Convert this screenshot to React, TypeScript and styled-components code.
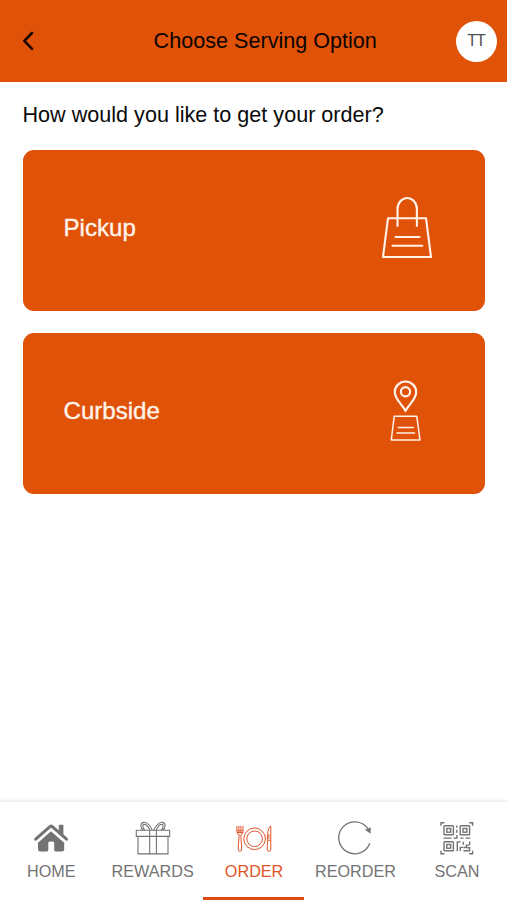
import React from 'react';
import styled, { createGlobalStyle } from 'styled-components';

const ORANGE = '#df5207';

const GlobalStyle = createGlobalStyle`
  * { box-sizing: border-box; }
  body { margin: 0; background: #fff; font-family: "Liberation Sans", Arial, sans-serif; }
  button { font: inherit; border: 0; padding: 0; background: none; cursor: pointer; }
  svg { display: block; }
`;

const Screen = styled.div`
  width: 100%;
  height: 100vh;
  display: flex;
  flex-direction: column;
  overflow: hidden;
`;

const Header = styled.header`
  height: 81.5px;
  flex: none;
  display: grid;
  grid-template-columns: 60px 1fr 60px;
  align-items: center;
  padding: 1px 10.5px 0 22px;
  background: ${ORANGE};
`;

const BackButton = styled.button`
  justify-self: start;
`;

const Title = styled.h1`
  margin: 0 0 0 12px;
  text-align: center;
  font-size: 21.6px;
  line-height: 26px;
  font-weight: 400;
  color: #0c0400;
  white-space: nowrap;
`;

const Avatar = styled.div`
  justify-self: end;
  width: 41px;
  height: 41px;
  display: flex;
  align-items: center;
  justify-content: center;
  border-radius: 50%;
  background: #fff;
  color: #4c5052;
  font-size: 16px;
  letter-spacing: -0.9px;
`;

const Content = styled.main`
  flex: 1;
  padding: 20px 22px 0 22.5px;
`;

const Question = styled.p`
  margin: 0 0 22px;
  font-size: 21.6px;
  line-height: 26px;
  color: #0b0b0b;
  white-space: nowrap;
`;

const Options = styled.div`
  display: grid;
  gap: 22px;
`;

const OptionCard = styled.button`
  height: 161.3px;
  display: flex;
  align-items: center;
  justify-content: space-between;
  padding: 0 52px 4px 41px;
  border-radius: 11px;
  background: ${ORANGE};
  color: #fff4ed;
`;

const OptionLabel = styled.span`
  font-size: 24.1px;
  -webkit-text-stroke: 0.35px currentColor;
`;

const TabBar = styled.nav`
  flex: none;
  height: 98px;
  display: grid;
  grid-template-columns: repeat(5, 1fr);
  background: #fff;
  box-shadow: 0 -1px 4px rgba(0, 0, 0, 0.12);
`;

const Tab = styled.button<{ $active?: boolean }>`
  display: flex;
  flex-direction: column;
  align-items: center;
  padding: 18.6px 0 0 1.2px;
  color: ${(p) => (p.$active ? '#e1542a' : '#737373')};
  border-bottom: 3px solid ${(p) => (p.$active ? '#dd4a17' : 'transparent')};
`;

const TabLabel = styled.span`
  margin-top: 5.4px;
  font-size: 16.2px;
  line-height: 18px;
`;

const BackIcon = () => (
  <svg width="13" height="20" viewBox="0 0 13 20" fill="none" stroke="#180700" strokeWidth="2.6" strokeLinecap="round" strokeLinejoin="round">
    <path d="M10 2 2.3 9.9 10 17.9" />
  </svg>
);

const BagIcon = () => (
  <svg width="52" height="64" viewBox="0 0 52 64" fill="none" stroke="#fff2e9" strokeWidth="2.1" strokeLinecap="round" strokeLinejoin="round">
    <path d="M7 22.2H45L50 61H2Z" />
    <path d="M16.5 30V13a9.7 11 0 0 1 19.4 0v17" />
    <path d="M14.5 41H38.5M11.5 49.7H41.3" />
  </svg>
);

const CurbsideIcon = () => (
  <svg width="54" height="64" viewBox="0 0 54 64" fill="none" stroke="#fff2e9" strokeLinecap="round" strokeLinejoin="round">
    <path strokeWidth="2.2" d="M26.5 32C23.6 26 15.8 20.2 15.8 13.2a10.7 10.7 0 0 1 21.4 0C37.2 20.2 29.4 26 26.5 32Z" />
    <circle strokeWidth="2.2" cx="26.5" cy="12.7" r="4.6" />
    <path strokeWidth="1.5" d="M15.2 37.3H37.8L41 61H12.3Z" />
    <path strokeWidth="1.5" d="M19.3 48.5H34.3M18 54H35.5" />
  </svg>
);

const HomeIcon = () => (
  <svg width="36" height="36" viewBox="0 0 36 36" fill="currentColor">
    <path d="M25.8 4.8q0-1 1-1h2.6q1 0 1 1v10l-4.6-4Z" />
    <path d="M2.7 18.2 17.2 5.4q.9-.7 1.8 0l14.5 12.8" fill="none" stroke="currentColor" strokeWidth="3.1" strokeLinecap="round" />
    <path d="M18 10.3 31.2 21.7V28q0 2.5-2.5 2.5H23q-1.8 0-1.8-1.5v-7q0-1.5-1.5-1.5h-2.9q-1.5 0-1.5 1.5V29q0 1.5-1.8 1.5H7.5Q5 30.5 5 28v-6.3Z" />
  </svg>
);

const GiftIcon = () => (
  <svg width="36" height="36" viewBox="0 0 36 36" fill="none" stroke="currentColor" strokeWidth="1.1">
    <path d="M1.3 9.2H34.7V15.4H1.3ZM3 15.4V32.9H33V15.4M14.7 9.2V32.9M21.4 9.2V32.9" />
    <path d="M17.2 9C14.7 3.5 11 .6 8.3 1.4 4.9 2.4 5.5 7.2 8 9M14.7 8.7C12.8 5 10.8 3 9 3.4 7 4 7.8 7.5 9.8 9M18.8 9C21.3 3.5 25 .6 27.7 1.4 31.1 2.4 30.5 7.2 28 9M21.3 8.7C23.2 5 25.2 3 27 3.4 29 4 28.2 7.5 26.2 9" />
  </svg>
);

const DiningIcon = () => (
  <svg width="36" height="36" viewBox="0 0 36 36" fill="none" stroke="currentColor" strokeWidth="1">
    <circle cx="18.6" cy="17.8" r="10.8" />
    <circle cx="18.6" cy="17.8" r="7.8" />
    <path d="M.9 5V11q0 2.3 2.3 2.6L2.1 28q0 2.3 1.8 2.3T5.7 28L4.8 13.6Q7 13 7 11V5M2.9 4.8v6M4.9 4.8v6M1 9.8H7M1.2 11.5H6.8" />
    <path d="M31.4 19.3C31.2 13.5 31.8 7 34.8 4.9V28q0 2.3-1.8 2.3T31.2 28l.4-8.7H35M32.9 13v5" />
  </svg>
);

const ReorderIcon = () => (
  <svg width="36" height="36" viewBox="0 0 36 36" fill="none" stroke="currentColor" strokeWidth="1.3">
    <path d="M32.8 22.3A16 16 0 1 1 30.8 7.5" />
    <path d="m28 8.7 5.8-2.4-.2 6.4Z" fill="currentColor" stroke="none" />
  </svg>
);

const ScanIcon = () => (
  <svg width="36" height="36" viewBox="0 0 36 36" fill="none" stroke="currentColor" strokeWidth="1.4">
    <path d="M2 4.7V1.8H5.5M30.2 1.8H33.6V4.7M33.6 29.8V32.7H30.2M5.5 32.7H2V29.8" />
    <rect x="5" y="4.8" width="9.4" height="9" rx=".8" />
    <rect x="7.8" y="7.5" width="3.9" height="3.7" />
    <rect x="21.2" y="4.8" width="9.4" height="9" rx=".8" />
    <rect x="24" y="7.5" width="3.9" height="3.7" />
    <rect x="5" y="20.8" width="9.4" height="9" rx=".8" />
    <rect x="7.8" y="23.5" width="3.9" height="3.7" />
    <path d="M17.8 4.5v2.2M17.8 8.7v3M4.5 17.1h8M14.5 17.1h3.4v-3.2M21.5 17.1h3M26.5 17.1h4.8M18.3 30.3v-9.4h3.4M24.3 20.8v3M30.7 20.5v3.2M21.3 29.9v-3.5h2.6M24.3 26.5h3.1v-2.4h3.2M24.4 29.8h6.2v-3.1h-2.4" />
  </svg>
);

const tabs = [
  { label: 'HOME', Icon: HomeIcon },
  { label: 'REWARDS', Icon: GiftIcon },
  { label: 'ORDER', Icon: DiningIcon, active: true },
  { label: 'REORDER', Icon: ReorderIcon },
  { label: 'SCAN', Icon: ScanIcon },
];

export default function App() {
  return (
    <Screen>
      <GlobalStyle />
      <Header>
        <BackButton aria-label="Back"><BackIcon /></BackButton>
        <Title>Choose Serving Option</Title>
        <Avatar>TT</Avatar>
      </Header>
      <Content>
        <Question>How would you like to get your order?</Question>
        <Options>
          <OptionCard><OptionLabel>Pickup</OptionLabel><BagIcon /></OptionCard>
          <OptionCard><OptionLabel>Curbside</OptionLabel><CurbsideIcon /></OptionCard>
        </Options>
      </Content>
      <TabBar>
        {tabs.map(({ label, Icon, active }) => (
          <Tab key={label} $active={active}>
            <Icon />
            <TabLabel>{label}</TabLabel>
          </Tab>
        ))}
      </TabBar>
    </Screen>
  );
}
